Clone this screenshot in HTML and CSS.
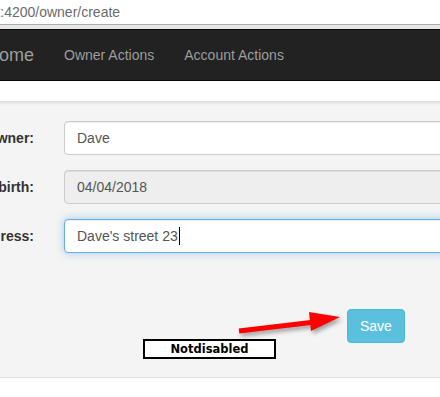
FILE: index.html
```html
<!DOCTYPE html>
<html lang="en">
<head>
	<meta charset="UTF-8">
	<meta name="viewport" content="width=device-width">
	<title>Owner create</title>
	<link rel="stylesheet" href="styles.css">
</head>
<body>
<div class="address_bar">
	<span class="address_text">localhost:4200/owner/create</span>
</div>
<div class="address_strip"></div>
<div class="main_wrap">
	<div class="nav_wrap">
		<div class="nav_inner">
			<a class="nav_brand" href="#">Home</a>
			<ul class="nav_list">
				<li><a class="nav_link" href="#">Owner Actions</a></li>
				<li><a class="nav_link" href="#">Account Actions</a></li>
			</ul>
		</div>
	</div>
	<div class="body_wrap">
		<div class="well_box">
			<form action="" method="post" class="form_wrap">
				<div class="form_group">
					<label class="form_label"><span>Owner:</span></label>
					<div class="form_col"><div class="form_control">Dave</div></div>
				</div>
				<div class="form_group">
					<label class="form_label"><span>Date of birth:</span></label>
					<div class="form_col"><div class="form_control is_disabled">04/04/2018</div></div>
				</div>
				<div class="form_group">
					<label class="form_label"><span>Address:</span></label>
					<div class="form_col"><div class="form_control is_focus">Dave's street 23<span class="caret"></span></div></div>
				</div>
				<div class="form_group btn_group">
					<div class="form_label"></div>
					<div class="form_col"><button type="button" class="btn_save">Save</button></div>
				</div>
			</form>
			<!-- annotation laid over the screenshot -->
			<svg class="note_arrow" width="120" height="30" viewBox="0 0 120 30">
				<line x1="4" y1="23" x2="80" y2="14" stroke="#f00" stroke-width="5"/>
				<polygon points="74,4 105,9 76,23" fill="#f00"/>
			</svg>
			<div class="note_box">Notdisabled</div>
		</div>
	</div>
</div>
</body>
</html>
```

FILE: styles.css
```css
body,div,ul,li,form,p{margin:0;padding:0}
ul,li{list-style:none}
html,body{overflow:hidden}
body{background:#fff;font-size:14px;line-height:20px;font-family:'Liberation Sans',Arial,sans-serif;color:#333}
a{text-decoration:none}
button{border:0 none;font-family:inherit;cursor:pointer}

.address_bar{height:24px;border-bottom:1px solid #acacac;overflow:hidden;white-space:nowrap}
.address_text{display:block;margin-left:-55px;line-height:24px;font-size:14px;color:#6b6b6b}
.address_strip{height:4px;background:#e6e6e6}

.main_wrap{width:1200px;margin-left:-43px}
.nav_wrap{height:50px;background:#222;border:1px solid #080808;margin-bottom:20px}
.nav_inner{display:flex;padding:0 13px}
.nav_brand{padding:0 15px;line-height:50px;font-size:18px;color:#9d9d9d}
.nav_list{display:flex}
.nav_link{display:block;padding:0 15px;line-height:50px;color:#9d9d9d}

.body_wrap{padding:0 15px}
.well_box{position:relative;background:#f4f4f4;border-top:1px solid #dcdcdc;border-bottom:1px solid #e0e0e0;padding:19px 19px 19px 20px;box-shadow:inset 0 2px 2px rgba(0,0,0,.05)}
.form_group{display:grid;grid-template-columns:57px 1fr;margin-bottom:15px}
.form_label{display:flex;justify-content:flex-end;padding:7px 15px 0 0;font-weight:bold;white-space:nowrap}
.form_col{padding-left:15px}
.form_control{height:34px;box-sizing:border-box;padding:6px 12px;line-height:20px;color:#555;background:#fff;border:1px solid #ccc;border-radius:4px;box-shadow:inset 0 1px 1px rgba(0,0,0,.075)}
.form_control.is_disabled{background:#eee}
.form_control.is_focus{border-color:#66afe9;box-shadow:inset 0 1px 1px rgba(0,0,0,.075),0 0 8px rgba(102,175,233,.6)}
.caret{display:inline-block;width:1px;height:18px;margin-left:1px;vertical-align:-4px;background:#000}
.btn_group{margin-top:56px}
.btn_save{margin-left:283px;height:34px;padding:6px 12px;font-size:14px;line-height:20px;color:#fff;background:#5bc0de;border:1px solid #46b8da;border-radius:4px}

.note_arrow{position:absolute;left:263px;top:206px;filter:drop-shadow(2px 3px 2px rgba(0,0,0,.35))}
.note_box{position:absolute;left:171px;top:237px;width:129px;height:16px;border:2px solid #000;background:#fff;text-align:center;font-family:'DejaVu Sans',Tahoma,sans-serif;font-size:11.5px;font-weight:bold;line-height:16px;color:#000}
```
